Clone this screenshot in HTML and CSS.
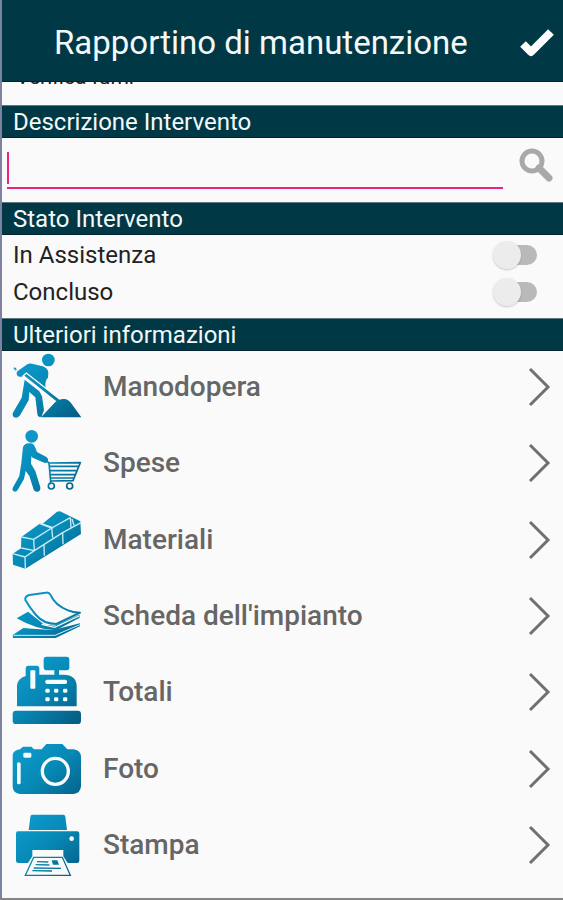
FILE: index.html
```html
<!DOCTYPE html>
<html lang="it">
<head>
<meta charset="utf-8">
<meta name="viewport" content="width=device-width, initial-scale=1">
<title>Rapportino di manutenzione</title>
<link rel="stylesheet" href="styles.css">
</head>
<body>
<svg class="defs" aria-hidden="true">
  <defs>
    <linearGradient id="blue" gradientUnits="userSpaceOnUse" x1="60" y1="30" x2="220" y2="220">
      <stop offset="0" stop-color="#0d9dce"/>
      <stop offset="0.5" stop-color="#0788b5"/>
      <stop offset="1" stop-color="#055f86"/>
    </linearGradient>
  </defs>
</svg>
<header class="topbar">
  <h1>Rapportino di manutenzione</h1>
  <button class="icon-button" type="button" aria-label="Conferma">
    <svg width="36" height="32" viewBox="0 0 36 32"><path d="M4 17 L12 25 L32 5" fill="none" stroke="#fff" stroke-width="8" stroke-linejoin="round"/></svg>
  </button>
</header>
<main>
  <div class="scrolled"><span>Verifica fumi</span></div>

  <h2><label for="descrizione">Descrizione Intervento</label></h2>
  <div class="search">
    <div class="field"><input id="descrizione" type="text"></div>
    <button class="icon-button" type="button" aria-label="Cerca">
      <svg width="34" height="34" viewBox="0 0 34 34" fill="none" stroke="#a9a9a9"><circle cx="13" cy="13" r="10" stroke-width="5"/><path d="M20 20 L30 30" stroke-width="7" stroke-linecap="round"/></svg>
    </button>
  </div>

  <h2>Stato Intervento</h2>
  <div class="states">
    <label class="state">In Assistenza<input type="checkbox" role="switch"></label>
    <label class="state">Concluso<input type="checkbox" role="switch"></label>
  </div>

  <h2>Ulteriori informazioni</h2>
  <nav class="list">
    <a class="item" href="#manodopera">
      <svg class="pic" viewBox="33 18 216 216" fill="url(#blue)">
        <circle cx="145" cy="45" r="19"/>
        <path d="M82 58 Q88 54 96 56 L128 64 Q145 70 145 84 L144 98 Q136 104 136 122 L137 130 L84 88 L78 85 L69 93 Q58 99 51 91 Q47 84 53 78 Z"/>
        <path d="M74 104 L118 139 L126 154 L132 196 L124 216 Q112 216 112 206 L106 157 L88 141 L86 166 L60 211 Q52 222 41 216 Q35 209 40 201 L65 158 Z"/>
        <path d="M70 92 L79 84 L181 164 L173 174 Z" stroke="#fafafa" stroke-width="4"/>
        <path d="M123 217 L166 171 Q180 161 190 162 Q202 160 213 174 L244 217 Z"/>
        <path d="M44 70 l3 3" stroke="#0d9dce" stroke-width="6" stroke-linecap="round"/>
      </svg>
      <span>Manodopera</span>
      <svg class="chevron" viewBox="0 0 24 40"><path d="M2 2 L20 20 L2 38"/></svg>
    </a>
    <a class="item" href="#spese">
      <svg class="pic" viewBox="33 16 216 216" fill="url(#blue)">
        <circle cx="95" cy="44" r="19"/>
        <path d="M69 76 Q75 62 91 65 Q101 66 105 76 L111 91 L138 105 Q149 113 141 122 Q137 126 129 122 L98 108 L94 104 L93 126 L106 148 L121 197 Q122 208 114 210 Q105 212 101 204 L88 163 L77 148 L72 172 L53 205 Q47 213 40 208 Q35 203 40 195 L58 163 L64 124 Z"/>
        <g fill="none" stroke="url(#blue)" stroke-width="5" stroke-linejoin="round">
          <path d="M140 118 L147 124 L241 123 L219 177 L152 178 L147 124 M152 178 L151 188"/>
          <path d="M149 134 H235 M150 147 H230 M151 159 H226 M152 169 H221"/>
          <circle cx="154" cy="193" r="9"/><circle cx="209" cy="193" r="9"/>
        </g>
      </svg>
      <span>Spese</span>
      <svg class="chevron" viewBox="0 0 24 40"><path d="M2 2 L20 20 L2 38"/></svg>
    </a>
    <a class="item" href="#materiali">
      <svg class="pic" viewBox="33 11 216 216" fill="url(#blue)">
        <path d="M38 160 L63 144 L64 110 L119 70 L127 71 L171 34 L180 33 L241 63 L243 101 L76 205 L39 193 Z"/>
        <path fill="none" stroke="#c9edf7" stroke-width="4" stroke-linejoin="round" d="M38 160 L75 170 L103 151 L188 97 L243 67 M75 170 L76 205 M64 110 L101 117 L103 151 M101 117 L155 83 L211 52 M119 70 L155 83 L158 112 M127 71 L160 83 M211 52 L213 82 M132 134 L133 166 M188 99 L189 132 M64 143 L103 151 M216 56 L222 75"/>
      </svg>
      <span>Materiali</span>
      <svg class="chevron" viewBox="0 0 24 40"><path d="M2 2 L20 20 L2 38"/></svg>
    </a>
    <a class="item" href="#scheda">
      <svg class="pic" viewBox="33 7 216 216" fill="url(#blue)">
        <path d="M38 172 L70 151 Q102 154 159 157 L240 137 L240 146 L167 181 L39 181 Z"/>
        <path d="M40 173 L165 173 L240 141" fill="none" stroke="#d7eff6" stroke-width="3"/>
        <path d="M50 122 L84 102 L133 141 L164 144 L238 111 L239 120 L168 158 Q111 157 50 122 Z"/>
        <path d="M125 140 L164 149 L237 115" fill="none" stroke="#fafafa" stroke-width="4"/>
        <path d="M76 62 Q78 54 88 52 L137 45 Q147 43 151 51 Q165 83 204 98 Q218 104 240 105 L169 139 Q131 139 108 112 Q90 91 76 67 Z" fill="#fafafa" stroke="url(#blue)" stroke-width="6" stroke-linejoin="round"/>
      </svg>
      <span>Scheda dell'impianto</span>
      <svg class="chevron" viewBox="0 0 24 40"><path d="M2 2 L20 20 L2 38"/></svg>
    </a>
    <a class="item" href="#totali">
      <svg class="pic" viewBox="33 20 216 216" fill="url(#blue)">
        <path d="M139 22 H200 Q208 22 208 31 V54 Q208 63 200 63 H177 V76 H191 Q229 77 230 110 V171 H51 V110 Q52 88 77 80 V58 Q77 49 85 49 H110 Q118 49 118 57 V76 H163 V63 H139 Q131 63 131 54 V31 Q131 22 139 22 Z"/>
        <rect x="38" y="184" width="205" height="40" rx="10"/>
        <g fill="#f7fcfe">
          <rect x="91" y="63" width="15" height="55" rx="3"/>
          <rect x="136" y="91" width="65" height="13" rx="5"/>
          <rect x="136" y="118" width="13" height="12" rx="4"/><rect x="162" y="118" width="13" height="12" rx="4"/><rect x="189" y="118" width="13" height="12" rx="4"/>
          <rect x="136" y="144" width="13" height="12" rx="4"/><rect x="162" y="144" width="13" height="12" rx="4"/><rect x="189" y="144" width="13" height="12" rx="4"/>
        </g>
      </svg>
      <span>Totali</span>
      <svg class="chevron" viewBox="0 0 24 40"><path d="M2 2 L20 20 L2 38"/></svg>
    </a>
    <a class="item" href="#foto">
      <svg class="pic" viewBox="33 3 216 216" fill="url(#blue)">
        <path d="M38 70 Q39 55 60 52 L69 44 H94 L102 52 H125 L139 36 H187 L202 52 H220 Q242 55 243 74 V163 Q241 185 220 186 H60 Q40 184 38 165 Z"/>
        <circle cx="166" cy="118" r="39" fill="none" stroke="#f7fcfe" stroke-width="10"/>
        <rect x="70" y="62" width="24" height="15" rx="4" fill="#f7fcfe"/>
        <rect x="51" y="91" width="11" height="66" rx="5" fill="#f7fcfe"/>
      </svg>
      <span>Foto</span>
      <svg class="chevron" viewBox="0 0 24 40"><path d="M2 2 L20 20 L2 38"/></svg>
    </a>
    <a class="item" href="#stampa">
      <svg class="pic" viewBox="33 13 216 216" fill="url(#blue)">
        <path d="M96 30 H190 Q195 30 196 36 L201 76 H86 L91 36 Q92 30 96 30 Z"/>
        <path d="M54 80 H232 Q238 80 238 86 V168 Q238 175 231 175 H203 L190 155 V136 H97 V155 L84 175 H55 Q48 175 48 168 V86 Q48 80 54 80 Z"/>
        <circle cx="215" cy="102" r="7" fill="#f7fcfe"/>
        <path d="M101 158 H187 L211 212 H76 Z" fill="#fafafa" stroke="url(#blue)" stroke-width="4"/>
        <path d="M155 167 H172 L177 180 H159 Z"/>
        <path d="M111 171 L145 172 M107 180 L148 181 M101 190 L183 191 M97 198 L156 199" stroke="url(#blue)" stroke-width="4"/>
      </svg>
      <span>Stampa</span>
      <svg class="chevron" viewBox="0 0 24 40"><path d="M2 2 L20 20 L2 38"/></svg>
    </a>
  </nav>
</main>
</body>
</html>
```
FILE: styles.css
```css
* {
  box-sizing: border-box;
}

body {
  display: flex;
  flex-direction: column;
  min-height: 100vh;
  margin: 0;
  border-left: 2px solid #7d82a0;
  border-bottom: 2px solid #858585;
  background: #fafafa;
  color: #222;
  font-family: Roboto, "Liberation Sans", sans-serif;
  font-size: 24px;
}

.defs {
  position: absolute;
  width: 0;
  height: 0;
}

.topbar {
  display: flex;
  align-items: center;
  justify-content: space-between;
  height: 82px;
  padding: 4px 8px 0 52px;
  border-bottom: 1px solid #02222f;
  background: #003846;
}

h1 {
  margin: 0;
  color: #f4f8f9;
  font-size: 33px;
  font-weight: 400;
  line-height: 40px;
}

.icon-button {
  display: flex;
  padding: 0;
  border: 0;
  background: none;
}

main {
  display: flex;
  flex: 1;
  flex-direction: column;
}

.scrolled {
  height: 23px;
  padding-left: 14px;
  overflow: hidden;
  font-size: 21px;
  line-height: 24px;
}

.scrolled span {
  display: block;
  margin-top: -17px;
}

h2 {
  height: 33px;
  margin: 0;
  padding-left: 11px;
  border-top: 1px solid #5f7780;
  border-bottom: 1px solid #02222f;
  background: #003846;
  color: #f4f8f9;
  font-size: 24px;
  font-weight: 400;
  line-height: 32px;
}

.search {
  display: flex;
  align-items: center;
  justify-content: space-between;
  height: 64px;
  padding: 0 10px 10px 5px;
}

.field {
  position: relative;
  flex: 1;
  margin: 10px 16px 0 0;
  border-bottom: 2px solid #e9257f;
}

.field::before {
  position: absolute;
  top: 1px;
  left: 0;
  width: 2px;
  height: 32px;
  background: #e9257f;
  content: "";
}

.field input {
  display: block;
  width: 100%;
  height: 36px;
  padding: 0 8px;
  border: 0;
  outline: 0;
  background: none;
  font: inherit;
}

.states {
  padding: 1px 0 8px;
}

.state {
  display: flex;
  align-items: center;
  justify-content: space-between;
  height: 37px;
  padding: 0 26px 0 11px;
}

.state input {
  position: relative;
  width: 40px;
  height: 20px;
  margin: 0;
  border-radius: 10px;
  background: #b9b9b9;
  appearance: none;
}

.state input::before {
  position: absolute;
  top: -4px;
  left: -4px;
  width: 28px;
  height: 28px;
  border-radius: 50%;
  background: #ececec;
  box-shadow: 0 1px 2px #0003;
  content: "";
}

.state input:checked::before {
  left: 16px;
}

.list {
  display: flex;
  flex: 1;
  flex-direction: column;
  justify-content: space-between;
  padding-bottom: 17px;
}

.item {
  display: flex;
  align-items: center;
  gap: 20px;
  padding: 0 11px 0 9px;
  color: #666;
  font-size: 28px;
  font-weight: 500;
  line-height: 32px;
  text-decoration: none;
}

.item span {
  flex: 1;
}

.pic {
  width: 72px;
  height: 72px;
}

.chevron {
  width: 24px;
  height: 40px;
  fill: none;
  stroke: #707070;
  stroke-width: 3;
}
```
